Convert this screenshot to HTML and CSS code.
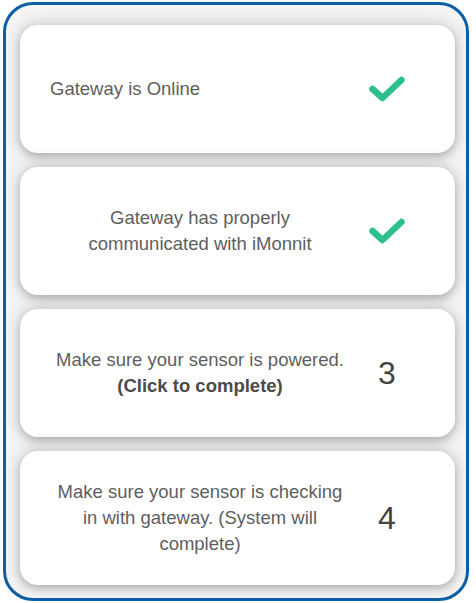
FILE: index.html
```html
<!DOCTYPE html>
<html>
<head>
<meta charset="utf-8">
<link rel="stylesheet" href="styles.css">
</head>
<body>
<div class="frame">
  <div class="card">
    <div class="msg left">Gateway is Online</div>
    <div class="status">
      <svg class="check" viewBox="0 0 38 28" width="38" height="28"><path d="M4.5 14 L14.5 23 L33.5 5" fill="none" stroke="#2ebf8e" stroke-width="6.5" stroke-linecap="round" stroke-linejoin="round"/></svg>
    </div>
  </div>
  <div class="card">
    <div class="msg">Gateway has properly communicated with iMonnit</div>
    <div class="status">
      <svg class="check" viewBox="0 0 38 28" width="38" height="28"><path d="M4.5 14 L14.5 23 L33.5 5" fill="none" stroke="#2ebf8e" stroke-width="6.5" stroke-linecap="round" stroke-linejoin="round"/></svg>
    </div>
  </div>
  <div class="card">
    <div class="msg">Make sure your sensor is powered.<br><b>(Click to complete)</b></div>
    <div class="status num">3</div>
  </div>
  <div class="card">
    <div class="msg">Make sure your sensor is checking in with gateway. (System will complete)</div>
    <div class="status num">4</div>
  </div>
</div>
</body>
</html>
```

FILE: styles.css
```css
html, body {
  margin: 0;
  padding: 0;
  background: #ffffff;
}
body {
  font-family: "Liberation Sans", Arial, sans-serif;
}
.frame {
  box-sizing: border-box;
  margin: 2px 0 0 3px;
  width: 466px;
  height: 599px;
  border: 3px solid #0b5fa6;
  border-radius: 30px;
  background: #f6f6f6;
  padding: 20px 11px 11px 14px;
  display: flex;
  flex-direction: column;
  gap: 14px;
  overflow: hidden;
}
.card {
  box-sizing: border-box;
  min-height: 128px;
  background: #ffffff;
  border-radius: 18px;
  box-shadow: 0 3px 8px rgba(0, 0, 0, 0.22), 0 0 18px 4px rgba(0, 0, 0, 0.12);
  padding: 28px 29px 28px 32px;
  display: grid;
  grid-template-columns: 296px 1fr;
  align-items: center;
}
.msg {
  font-size: 18.5px;
  line-height: 26px;
  color: #5e5e5e;
  text-align: center;
}
.msg.left {
  text-align: left;
  margin-left: -2px;
}
.msg b {
  color: #4a4a4a;
}
.status {
  display: flex;
  justify-content: center;
  align-items: center;
}
.num {
  font-size: 32px;
  color: #444444;
}
.check {
  display: block;
}
```
